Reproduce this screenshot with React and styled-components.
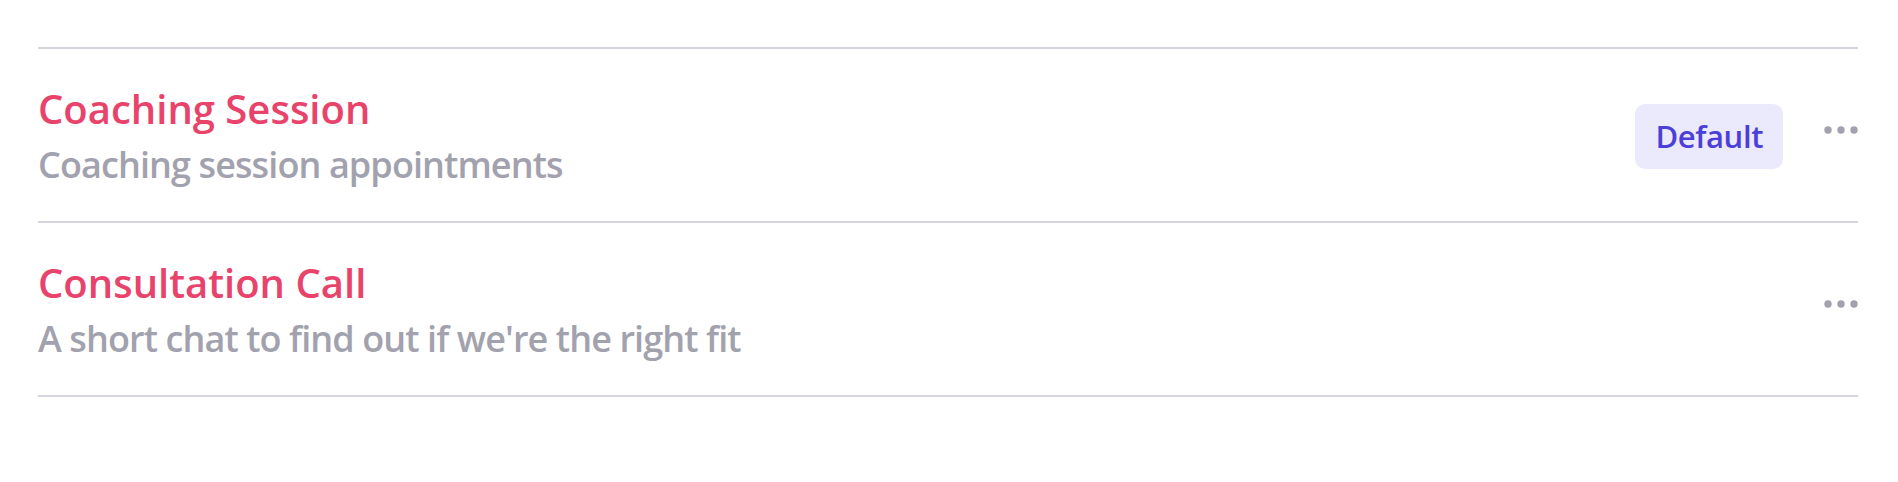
import styled, { createGlobalStyle } from "styled-components";

const GlobalStyle = createGlobalStyle`
  body {
    margin: 0;
    background: #ffffff;
    font-family: "Open Sans", "Lato", sans-serif;
  }
`;

const Page = styled.div`
  padding: 47px 40px 0 38px;
`;

const List = styled.ul`
  list-style: none;
  margin: 0;
  padding: 0;
  border-top: 2px solid #d5d4df;
`;

const Row = styled.li`
  display: flex;
  align-items: center;
  justify-content: space-between;
  padding: 36px 0 34px;
  border-bottom: 2px solid #d5d4df;
`;

const Info = styled.div`
  display: flex;
  flex-direction: column;
  gap: 10px;
`;

const Title = styled.h3`
  margin: 0;
  font-size: 40px;
  line-height: 48px;
  font-weight: 600;
  color: #e8436b;
`;

const Description = styled.p`
  margin: 0;
  font-size: 36px;
  line-height: 44px;
  font-weight: 600;
  letter-spacing: -0.9px;
  color: #a2a2ae;
`;

const Actions = styled.div`
  display: flex;
  align-items: center;
  gap: 41px;
`;

const Badge = styled.span`
  display: inline-flex;
  align-items: center;
  justify-content: center;
  height: 65px;
  padding: 0 20px;
  border-radius: 10px;
  background: #ebe9fc;
  color: #4b3fd8;
  font-size: 31px;
  font-weight: 600;
  letter-spacing: -0.4px;
`;

const MoreButton = styled.button`
  display: flex;
  align-items: flex-start;
  border: none;
  background: none;
  padding: 0 0 12px;
  cursor: pointer;
`;

const Dots = () => (
  <svg width="34" height="8" viewBox="0 0 34 8">
    <circle cx="4" cy="4" r="3.7" fill="#a2a1ad" />
    <circle cx="17" cy="4" r="3.7" fill="#a2a1ad" />
    <circle cx="30" cy="4" r="3.7" fill="#a2a1ad" />
  </svg>
);

const eventTypes = [
  {
    title: "Coaching Session",
    description: "Coaching session appointments",
    isDefault: true,
  },
  {
    title: "Consultation Call",
    description: "A short chat to find out if we're the right fit",
    isDefault: false,
  },
];

const App = () => {
  return (
    <Page>
      <GlobalStyle />
      <List>
        {eventTypes.map((item) => (
          <Row key={item.title}>
            <Info>
              <Title>{item.title}</Title>
              <Description>{item.description}</Description>
            </Info>
            <Actions>
              {item.isDefault && <Badge>Default</Badge>}
              <MoreButton aria-label="More options">
                <Dots />
              </MoreButton>
            </Actions>
          </Row>
        ))}
      </List>
    </Page>
  );
};

export default App;
